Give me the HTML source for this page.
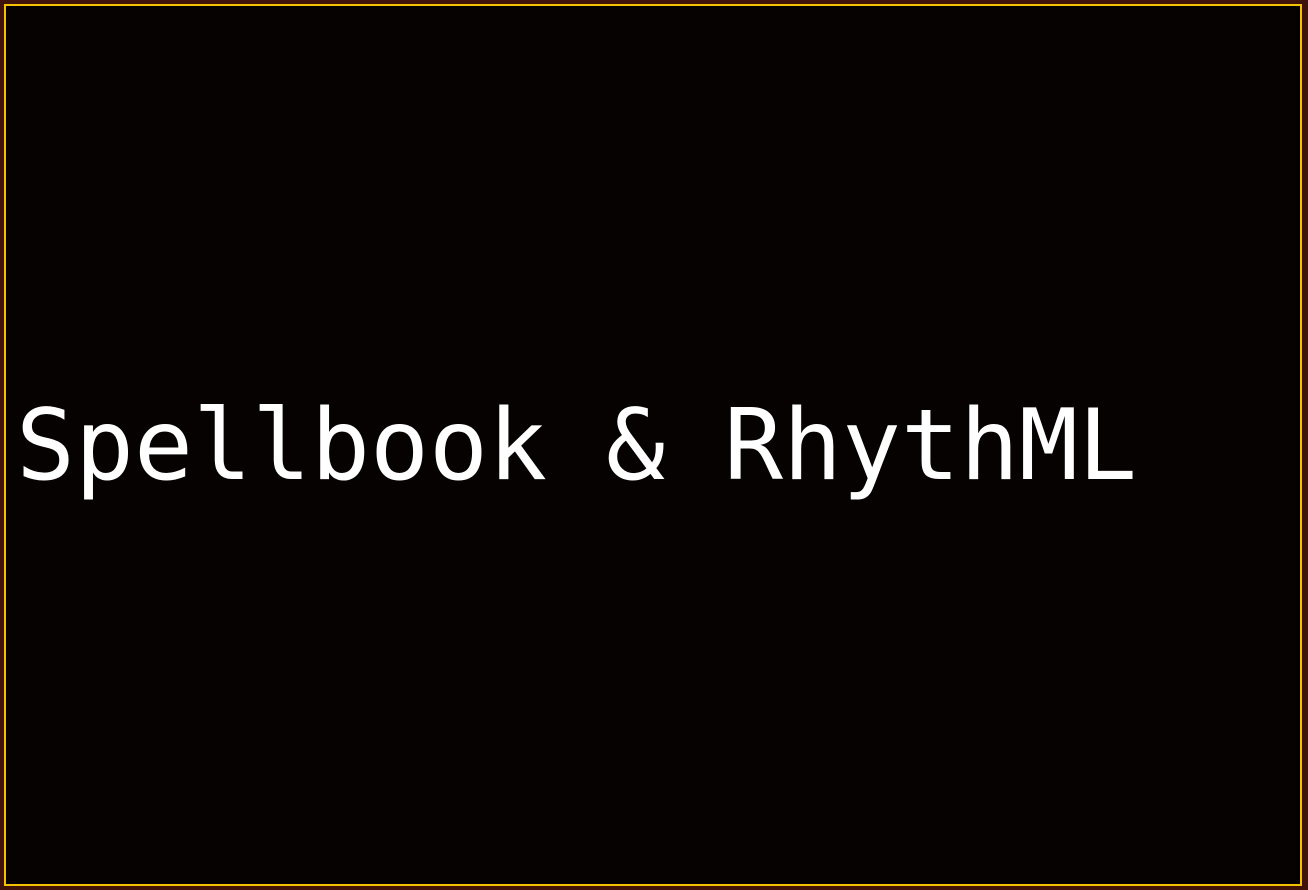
<!DOCTYPE html>
<html><head><style>
html,body{margin:0;padding:0;width:1308px;height:890px;overflow:hidden;background:#3f120a;}
.box{position:absolute;left:4px;top:4px;width:1294px;height:878px;border:2px solid #f2c200;background:#070202;}
.t{position:absolute;left:10px;top:380px;font-family:"DejaVu Sans Mono","Liberation Mono",monospace;font-size:98px;color:#fff;white-space:pre;line-height:120px;}
</style></head><body>
<div class="box"><div class="t">Spellbook &amp; RhythML</div></div>
</body></html>
